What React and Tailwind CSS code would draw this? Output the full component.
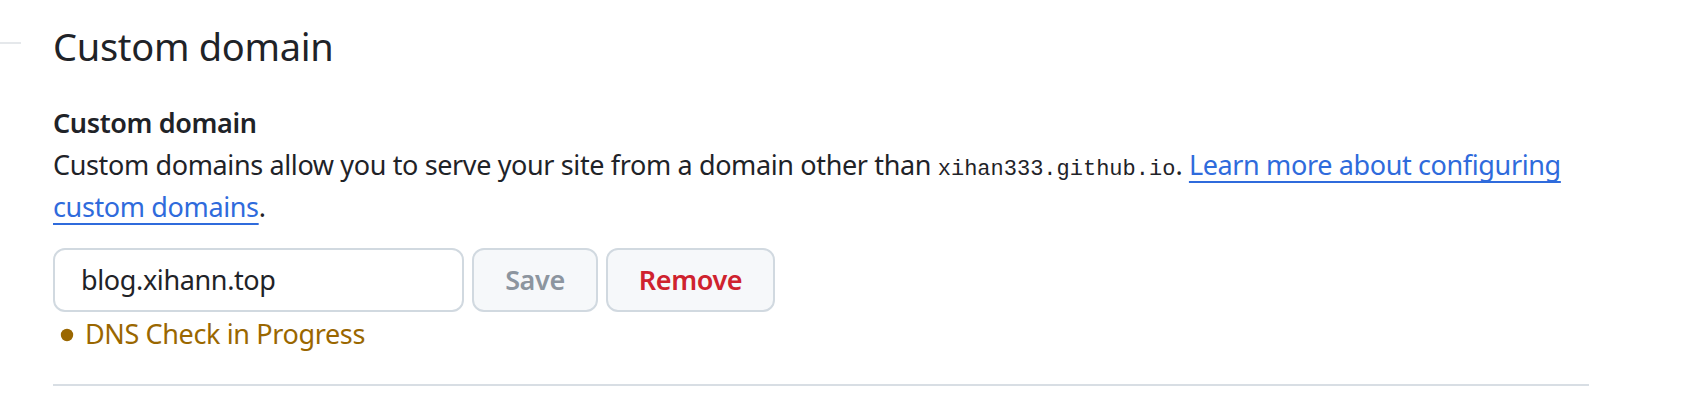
export default function App() {
  return (
    <div className="w-[1705px] h-[417px] bg-white flex font-['Noto_Sans',sans-serif] text-[#1f2328] overflow-hidden">
      <div className="w-[53px] shrink-0 pt-[42px]">
        <div className="w-[21px] h-[2px] bg-[#e5e8eb]" />
      </div>
      <div className="w-[1536px] shrink-0 pt-[16px] tracking-[-0.37px]">
        <h2 className="text-[38px] leading-[60px] font-normal tracking-[-0.3px]">Custom domain</h2>
        <div className="mt-[26px] text-[27px] leading-[42px] font-semibold">Custom domain</div>
        <p className="text-[27px] leading-[42px]">
          Custom domains allow you to serve your site from a domain other than{" "}
          <code className="font-['Liberation_Mono',monospace] text-[22px] leading-none tracking-normal">xihan333.github.io</code>.{" "}
          <a className="text-[#2f6bdc] underline decoration-2 underline-offset-[6px]">
            Learn more about configuring custom domains
          </a>
          .
        </p>
        <div className="mt-[20px] flex gap-[8px]">
          <div className="w-[411px] h-[64px] border-2 border-[#d1d9e0] rounded-[12px] bg-white flex items-center pl-[26px] text-[27px]">
            blog.xihann.top
          </div>
          <div className="w-[126px] h-[64px] border-2 border-[#d1d9e0] rounded-[12px] bg-[#f6f8fa] flex items-center justify-center text-[27px] font-semibold text-[#8c959f]">
            Save
          </div>
          <div className="w-[169px] h-[64px] border-2 border-[#d1d9e0] rounded-[12px] bg-[#f6f8fa] flex items-center justify-center text-[27px] font-semibold text-[#cf222e]">
            Remove
          </div>
        </div>
        <div className="mt-[4px] flex items-center text-[27px] leading-[36px] text-[#9a6700]">
          <svg width="26" height="24" viewBox="0 0 26 24" className="shrink-0 translate-y-[1px]">
            <circle cx="14" cy="12" r="6.2" fill="#9a6700" />
          </svg>
          <span className="ml-[6px]">DNS Check in Progress</span>
        </div>
        <div className="mt-[32px] h-[2px] bg-[#d8dee4]" />
      </div>
    </div>
  );
}
